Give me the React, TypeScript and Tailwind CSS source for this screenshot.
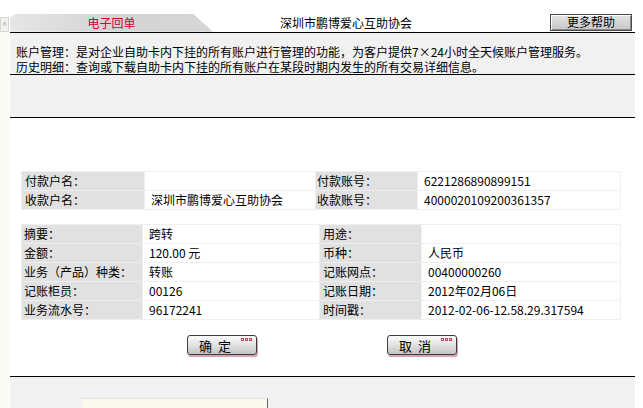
import React from "react";

type Row = [string, string, string, string];

const payRows: Row[] = [
  ["付款户名：", "", "付款账号：", "6221286890899151"],
  ["收款户名：", "深圳市鹏博爱心互助协会", "收款账号：", "4000020109200361357"],
];

const detailRows: Row[] = [
  ["摘要：", "跨转", "用途：", ""],
  ["金额：", "120.00 元", "币种：", "人民币"],
  ["业务（产品）种类：", "转账", "记账网点：", "00400000260"],
  ["记账柜员：", "00126", "记账日期：", "2012年02月06日"],
  ["业务流水号：", "96172241", "时间戳：", "2012-02-06-12.58.29.317594"],
];

const InfoTable = ({
  rows,
  gridClass,
  padClass,
}: {
  rows: Row[];
  gridClass: string;
  padClass: string[];
}) => (
  <div className={`grid ${gridClass} gap-px p-px bg-[#efefef] w-[600px] ml-[11px]`}>
    {rows.map((row, i) =>
      row.map((cell, j) => (
        <div
          key={`${i}-${j}`}
          className={`h-[18px] leading-[18px] whitespace-nowrap ${padClass[j]} ${
            j % 2 === 0 ? "bg-[#e1e1e1]" : "bg-white"
          }`}
        >
          {cell}
        </div>
      ))
    )}
  </div>
);

const ImgButton = ({ label }: { label: string }) => (
  <div className="relative w-[70px] h-[20px] rounded-[3px] border border-[#3c3c3c] bg-gradient-to-b from-[#fafafa] via-[#e2e2e2] to-[#c4c4c4] shadow-[1px_2px_0_#d8a3b1] flex items-center justify-center pr-[14px]">
    <span className="text-[13px] leading-none tracking-[6px] pl-[6px]">{label}</span>
    <div className="absolute right-[4px] top-[2px] flex gap-px">
      <span className="w-[3px] h-[3px] border border-[#d0405a]"></span>
      <span className="w-[3px] h-[3px] border border-[#d0405a]"></span>
      <span className="w-[3px] h-[3px] border border-[#d0405a]"></span>
    </div>
  </div>
);

const App = () => {
  return (
    <div className="flex w-[643px] h-[408px] overflow-hidden bg-white text-black text-[12px] font-['Noto_Sans_CJK_SC',sans-serif]">
      {/* left scroll strip */}
      <div className="w-[9px] mr-px flex flex-col">
        <div className="h-[17px] bg-white"></div>
        <div className="h-[15px] bg-[#f2f2ee] border border-[#d8d8d0] flex items-center justify-center text-[8px] text-[#999] leading-none">
          ^
        </div>
        <div className="flex-1 bg-[#faf9f2]"></div>
      </div>

      <div className="w-[625px] flex flex-col">
        {/* header */}
        <div className="h-[14px]"></div>
        <div className="h-[19px] flex items-start border-b border-black">
          <div className="w-[203px] h-[18px] rounded-tl-[7px] bg-gradient-to-r from-[#e6e6e6] via-[#d4d4d4] to-[#d6d6d6] [clip-path:polygon(0_0,183px_0,203px_100%,0_100%)] flex items-center justify-center">
            <span className="text-[#cc0033] leading-none">电子回单</span>
          </div>
          <div className="ml-[67px] h-[18px] leading-[18px]">深圳市鹏博爱心互助协会</div>
          <div className="flex-1"></div>
          <div className="mr-[3px] w-[82px] h-[17px] border border-[#4a4a4a] bg-gradient-to-b from-[#e4e4e4] to-[#c6c6c6] shadow-[inset_1px_1px_0_#ffffff,inset_-1px_-1px_0_#8a8a8a] flex items-center justify-center leading-none">
            更多帮助
          </div>
        </div>

        {/* description */}
        <div className="h-[43px] bg-[#f1f1f1] border-b border-black pt-[11px] pl-[6px] whitespace-nowrap flex flex-col">
          <div className="h-[15px] leading-[15px]">账户管理：是对企业自助卡内下挂的所有账户进行管理的功能，为客户提供7×24小时全天候账户管理服务。</div>
          <div className="h-[15px] leading-[15px]">历史明细：查询或下载自助卡内下挂的所有账户在某段时期内发生的所有交易详细信息。</div>
        </div>
        <div className="h-[43px] bg-[#f1f1f1] border-b border-black"></div>

        {/* body */}
        <div className="h-[261px] bg-white flex flex-col">
          <div className="h-[53px]"></div>
          <InfoTable
            rows={payRows}
            gridClass="grid-cols-[122px_170px_101px_202px]"
            padClass={["pl-[3px]", "pl-[6px]", "pl-px", "pl-[6px]"]}
          />
          <div className="h-[14px]"></div>
          <InfoTable
            rows={detailRows}
            gridClass="grid-cols-[120px_176px_101px_198px]"
            padClass={["pl-[2px]", "pl-[6px]", "pl-[3px]", "pl-[6px]"]}
          />
          <div className="flex mt-[15px]">
            <div className="ml-[177px]">
              <ImgButton label="确定" />
            </div>
            <div className="ml-[130px]">
              <ImgButton label="取消" />
            </div>
          </div>
        </div>

        {/* footer */}
        <div className="flex-1 bg-[#f1f1f1] border-t border-black">
          <div className="mt-[21px] ml-[72px] w-[186px] h-[10px] bg-[#fbf8ec] border-t border-[#e2e2e2] border-r border-r-[#666]"></div>
        </div>
      </div>
      <div className="flex-1 bg-white"></div>
    </div>
  );
};

export default App;
